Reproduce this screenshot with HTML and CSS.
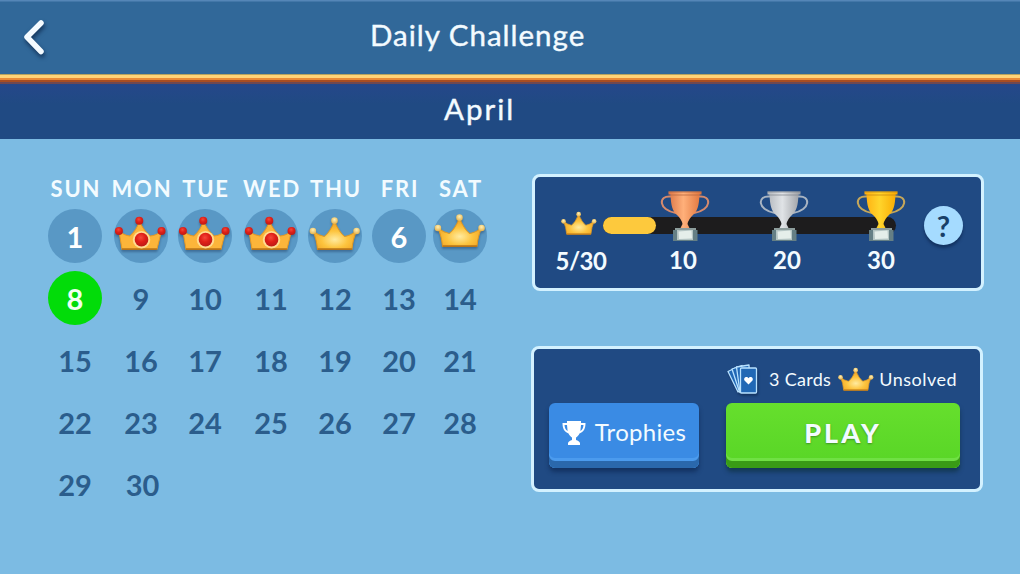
FILE: index.html
```html
<!DOCTYPE html>
<html lang="en">
<head>
<meta charset="utf-8">
<title>Daily Challenge</title>
<link rel="stylesheet" href="styles.css">
</head>
<body>
<svg class="defs" width="0" height="0" aria-hidden="true">
  <defs>
    <radialGradient id="gold" cx="0.5" cy="0.65" r="0.6"><stop offset="0" stop-color="#ffeba0"/><stop offset="0.5" stop-color="#fdc43e"/><stop offset="1" stop-color="#f0a021"/></radialGradient>
    <radialGradient id="ruby" cx="0.45" cy="0.35" r="0.65"><stop offset="0" stop-color="#f5483a"/><stop offset="0.5" stop-color="#e02018"/><stop offset="1" stop-color="#bd1a18"/></radialGradient>
    <radialGradient id="bead" cx="0.5" cy="0.35" r="0.65"><stop offset="0" stop-color="#fff0b4"/><stop offset="1" stop-color="#e5b04a"/></radialGradient>
    <linearGradient id="bronzeCup"><stop offset="0" stop-color="#dc7748"/><stop offset="0.45" stop-color="#ffb07a"/><stop offset="1" stop-color="#e0743c"/></linearGradient>
    <linearGradient id="silverCup"><stop offset="0" stop-color="#b3b8be"/><stop offset="0.45" stop-color="#e0e3e6"/><stop offset="1" stop-color="#9b9ea3"/></linearGradient>
    <linearGradient id="goldCup"><stop offset="0" stop-color="#ffae10"/><stop offset="0.45" stop-color="#ffd52c"/><stop offset="1" stop-color="#f8a800"/></linearGradient>
    <symbol id="crown-gold" viewBox="0 0 50 37">
      <path d="M3.500 15.500 Q9 20 14.500 21 Q20 17 24.500 6 Q29 17 34.500 21 Q40 20 46 15.500 Q42.500 23 41.500 33.500 H8 Q7 23 3.500 15.500 Z" fill="url(#gold)" stroke="#e09a25" stroke-width="1" stroke-linejoin="round"/>
      <path d="M8 33.200 H41.500" stroke="#b97519" stroke-width="1.600"/>
      <g fill="url(#bead)"><circle cx="3.500" cy="15.500" r="3.200"/><circle cx="24.500" cy="5.500" r="3.200"/><circle cx="46" cy="15.500" r="3.200"/></g>
    </symbol>
    <symbol id="crown-ruby" viewBox="0 0 50 37">
      <path d="M3.500 15.500 Q9 20 14 20.500 Q20 16 23.500 6 Q28 16 34 20.500 Q40 20 45 15.500 L40.500 33.500 H6.500 Z" fill="#fcb53a" stroke="#e69a26" stroke-width="1" stroke-linejoin="round"/>
      <path d="M6.500 33.200 H40.500" stroke="#b97519" stroke-width="1.600"/>
      <circle cx="25.500" cy="24" r="8.500" fill="#ffdc90"/>
      <g fill="url(#ruby)"><circle cx="25.500" cy="24" r="6.600"/><circle cx="3.500" cy="15.500" r="3.900"/><circle cx="23.300" cy="5.500" r="3.900"/><circle cx="45" cy="15.500" r="3.900"/></g>
    </symbol>
    <symbol id="trophy-base" viewBox="0 0 50 52">
      <rect x="15" y="37" width="21" height="4" fill="#8d9d9c"/>
      <rect x="13" y="39" width="24.500" height="11" fill="#657f85"/>
      <rect x="17" y="39" width="16" height="10" fill="#b5c5c4"/>
      <path d="M18.500 40.500 L31.500 39.500 L32 47.500 L19 48 Z" fill="#e5eeea"/>
    </symbol>
    <symbol id="trophy-handles" viewBox="0 0 50 52">
      <g fill="none" stroke-width="2"><path d="M11 5.500 C-2 4 -2 19 16 22"/><path d="M39 5.500 C52 4 52 19 34 22"/></g>
    </symbol>
    <symbol id="trophy-cup" viewBox="0 0 50 52">
      <path d="M8.500 0.500 H41.500 V3.500 H39.500 C39 15 37.500 20 33 24 Q28.500 28 27.500 33 L30 38 H20 L22.500 33 Q21.500 28 17 24 C12.500 20 11 15 10.500 3.500 H8.500 Z"/>
    </symbol>
  </defs>
</svg>

<header class="topbar">
  <svg class="back" viewBox="0 0 24 38"><path d="M18 5 L4 19 L18 33.500"/></svg>
  <h1 class="title">Daily Challenge</h1>
</header>
<div class="month">April</div>

<main class="content">
  <section class="calendar">
    <div class="weekday">SUN</div><div class="weekday">MON</div><div class="weekday">TUE</div><div class="weekday">WED</div><div class="weekday">THU</div><div class="weekday">FRI</div><div class="weekday">SAT</div>
    <div class="day past">1</div>
    <div class="day past"><svg class="crown"><use href="#crown-ruby"/></svg></div>
    <div class="day past"><svg class="crown"><use href="#crown-ruby"/></svg></div>
    <div class="day past"><svg class="crown"><use href="#crown-ruby"/></svg></div>
    <div class="day past"><svg class="crown"><use href="#crown-gold"/></svg></div>
    <div class="day past">6</div>
    <div class="day past"><svg class="crown raised"><use href="#crown-gold"/></svg></div>
    <div class="day today">8</div><div class="day">9</div><div class="day">10</div><div class="day">11</div><div class="day">12</div><div class="day">13</div><div class="day">14</div>
    <div class="day">15</div><div class="day">16</div><div class="day">17</div><div class="day">18</div><div class="day">19</div><div class="day">20</div><div class="day">21</div>
    <div class="day">22</div><div class="day">23</div><div class="day">24</div><div class="day">25</div><div class="day">26</div><div class="day">27</div><div class="day">28</div>
    <div class="day">29</div><div class="day last">30</div>
  </section>

  <div class="side">
    <section class="panel progress">
      <div class="count">
        <svg class="crown-small"><use href="#crown-gold"/></svg>
        <span class="label">5/30</span>
      </div>
      <div class="track">
        <div class="fill"></div>
        <div class="prize first">
          <svg class="trophy" viewBox="0 0 50 52">
            <use href="#trophy-handles" stroke="#d58a6d"/>
            <use href="#trophy-cup" fill="url(#bronzeCup)"/>
            <path d="M8.500 1 H41.500 M11 4 H39" stroke="#b9673f" stroke-width="0.800"/>
            <use href="#trophy-base"/>
          </svg>
          <span class="label">10</span>
        </div>
        <div class="prize second">
          <svg class="trophy" viewBox="0 0 50 52">
            <use href="#trophy-handles" stroke="#a8b4c2"/>
            <use href="#trophy-cup" fill="url(#silverCup)"/>
            <path d="M8.500 1 H41.500 M11 4 H39" stroke="#858b92" stroke-width="0.800"/>
            <use href="#trophy-base"/>
          </svg>
          <span class="label">20</span>
        </div>
        <div class="prize third">
          <svg class="trophy" viewBox="0 0 50 52">
            <use href="#trophy-handles" stroke="#c5a75a"/>
            <use href="#trophy-cup" fill="url(#goldCup)"/>
            <path d="M8.500 1 H41.500 M11 4 H39" stroke="#c98b10" stroke-width="0.800"/>
            <use href="#trophy-base"/>
          </svg>
          <span class="label">30</span>
        </div>
      </div>
      <button class="help">?</button>
    </section>

    <section class="panel actions">
      <button class="btn trophies">
        <svg class="cup" viewBox="0 0 24 26"><path d="M5 1 H19 V3 H23.500 C23.500 9 21.500 12 17.500 13.500 C16.500 15.500 15 17 14 17.500 V20 C16 20.500 17.500 21.500 18 23 V25 H6 V23 C6.500 21.500 8 20.500 10 20 V17.500 C9 17 7.500 15.500 6.500 13.500 C2.500 12 0.500 9 0.500 3 H5 Z M5 5 H2.500 C2.700 8 3.700 10 5.600 11 Z M19 5 H21.500 C21.300 8 20.300 10 18.400 11 Z" fill="#fff" fill-rule="evenodd"/></svg>
        <span class="trophies-text">Trophies</span>
      </button>
      <div class="play-group">
        <div class="info">
          <svg class="cards" viewBox="0 0 33 33">
            <g fill="#2168b5" stroke="#b9e2ff" stroke-width="1.300" stroke-linejoin="round">
              <path d="M2 8.500 L11 4 L20 24 L12 29 Z"/>
              <path d="M6 6 L16 2.500 L22 25 L13.500 29 Z"/>
              <path d="M10.500 4 L23 2 L24 28 L14 29.500 Z"/>
              <rect x="14.500" y="5" width="16" height="25" rx="1"/>
            </g>
            <path d="M22.500 21.500 L18.500 17.500 C17 14.500 21 12.500 22.500 15.300 C24 12.500 28 14.500 26.500 17.500 Z" fill="#fff"/>
          </svg>
          <span class="info-text">3 Cards</span>
          <svg class="crown-small"><use href="#crown-gold"/></svg>
          <span class="info-text unsolved">Unsolved</span>
        </div>
        <button class="btn play">PLAY</button>
      </div>
    </section>
  </div>
</main>
</body>
</html>
```
FILE: styles.css
```css
* { box-sizing: border-box; }
body {
  margin: 0;
  width: 1020px;
  height: 574px;
  overflow: hidden;
  background: #7cbbe3;
  color: #f3fbff;
  font-family: Lato, "Open Sans", sans-serif;
}
button { border: 0; padding: 0; font-family: inherit; color: inherit; }
.defs { display: block; }

.topbar {
  display: grid;
  grid-template-columns: 370px 1fr;
  align-items: start;
  height: 84px;
  padding-top: 18px;
  background: linear-gradient(#5586b7 0 1px, #316899 2px 74px, #b6a35f 74px 75px, #ffd477 75px 78px, #e98b38 78px 80px, #a94d21 80px 82px, #704850 82px 84px);
}
.back {
  width: 24px;
  height: 38px;
  margin-left: 23px;
  filter: drop-shadow(1px 3px 2px rgba(10, 35, 70, 0.75));
}
.back path { fill: none; stroke: #f4fbff; stroke-width: 5.5; stroke-linecap: round; stroke-linejoin: round; }
.title { margin: -1px 0 0; font-size: 29.5px; font-weight: 400; line-height: 36px; letter-spacing: 1px; -webkit-text-stroke: 0.4px; }
.month {
  height: 55px;
  padding-left: 444px;
  background: linear-gradient(#25478a, #204a83 20px);
  font-size: 29.5px;
  line-height: 49px;
  letter-spacing: 2px;
  -webkit-text-stroke: 0.4px;
}

.content { display: flex; height: 435px; }
.calendar {
  display: grid;
  grid-template-columns: 65px 67px 61px 71px 57px 71px 51px;
  grid-template-rows: 32px repeat(5, 62.2px);
  align-content: start;
  align-items: center;
  justify-items: center;
  width: 489px;
  padding: 34px 0 0 42.5px;
}
.weekday { font-size: 22px; font-weight: 700; line-height: 32px; letter-spacing: 1.8px; padding-left: 2px; margin-top: -1px; }
.day {
  display: flex;
  align-items: center;
  justify-content: center;
  width: 54px;
  height: 54px;
  border-radius: 50%;
  color: #2b5d8c;
  font-size: 29px;
  font-weight: 700;
}
.past { background: #5998c5; color: #fff; }
.today { background: #02dc09; color: #f1fff0; }
.last { padding-left: 3px; }
.crown { width: 52px; height: 38px; margin-bottom: 5px; flex: none; filter: drop-shadow(0 2px 1px rgba(35, 70, 110, 0.5)); }
.raised { margin-bottom: 10px; }

.side { display: flex; flex-direction: column; gap: 55px; padding: 35px 0 0 42px; }
.panel {
  display: flex;
  width: 452px;
  border: 3px solid #d3f1ff;
  border-radius: 8px;
  background: #204a83;
}
.progress { height: 117px; padding: 0 17px 0 16px; align-items: flex-start; margin-left: 1px; }
.count { display: flex; flex-direction: column; align-items: center; width: 60px; padding-top: 33px; }
.count .crown-small { margin-right: 4px; }
.count .label { margin-top: 9px; letter-spacing: -0.5px; }
.crown-small { width: 36px; height: 27px; flex: none; }
.label { font-size: 24px; font-weight: 700; line-height: 30px; }
.track { position: relative; width: 293px; height: 17px; margin: 40px 0 0 -8px; border-radius: 9px; background: #1d1c1d; }
.fill { width: 53px; height: 17px; border-radius: 9px; background: #fdc93d; }
.prize { position: absolute; top: -26px; display: flex; flex-direction: column; align-items: center; width: 50px; }
.first { left: 57px; }
.second { left: 156px; }
.third { left: 253px; }
.trophy { width: 50px; height: 52px; }
.prize .label { margin-top: 2px; }
.first .label { margin-right: 4px; }
.second .label { margin-left: 6px; }
.help {
  flex: none;
  width: 39px;
  height: 39px;
  margin: 29px 0 0 28px;
  border-radius: 50%;
  background: #a5dbff;
  box-shadow: 0 3px 3px rgba(10, 35, 75, 0.6);
  color: #193f68;
  font-size: 29px;
  font-weight: 700;
  line-height: 37px;
}

.actions { height: 146px; padding: 15px 20px 0 15px; justify-content: space-between; }
.btn { display: flex; align-items: center; justify-content: center; height: 65px; border-radius: 6px; padding-bottom: 6px; }
.trophies {
  width: 150px;
  margin-top: 39px;
  gap: 9px;
  background: #3a8be4;
  box-shadow: inset 0 -7px #2a68ac, inset 0 -10px #4b9bee, 0 4px 4px rgba(12, 38, 82, 0.65);
}
.cup { width: 24px; height: 26px; }
.trophies-text { font-size: 24px; letter-spacing: 0.3px; margin-top: -2px; }
.play-group { display: flex; flex-direction: column; width: 234px; }
.info { display: flex; align-items: center; height: 39px; padding-bottom: 9px; }
.cards { width: 33px; height: 33px; flex: none; filter: drop-shadow(1px 2px 1px rgba(10, 35, 75, 0.6)); }
.info-text { font-size: 18px; letter-spacing: 0.3px; margin: -1px 7px 0 10px; white-space: nowrap; }
.info .unsolved { margin: -1px 0 0 5px; letter-spacing: 0.5px; }
.play {
  width: 234px;
  background: linear-gradient(#66df2d, #58d526);
  box-shadow: inset 0 -7px #399b16, inset 0 -10px #70e044, 0 4px 4px rgba(12, 48, 62, 0.65);
  font-size: 27px;
  font-weight: 900;
  letter-spacing: 3px;
  text-shadow: 0 1px 2px rgba(40, 100, 30, 0.6);
}
```
